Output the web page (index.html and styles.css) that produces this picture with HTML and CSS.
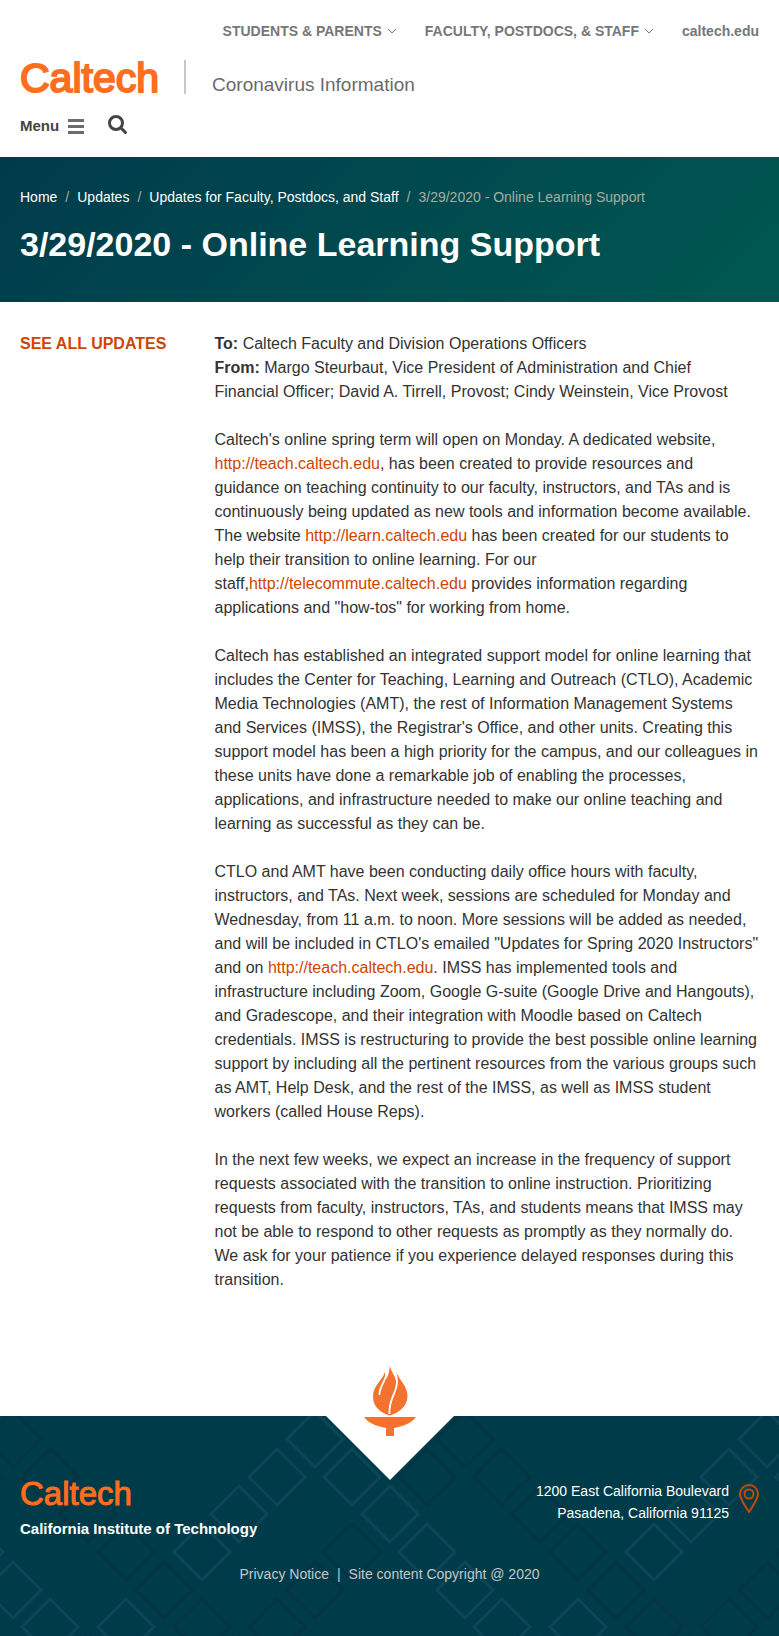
FILE: index.html
```html
<!DOCTYPE html>
<html lang="en">
<head>
<meta charset="utf-8">
<meta name="viewport" content="width=device-width, initial-scale=1">
<title>3/29/2020 - Online Learning Support</title>
<link rel="stylesheet" href="styles.css">
</head>
<body>
<header class="site-header">
  <nav class="audience-nav" aria-label="Audience">
    <button class="audience-item" type="button">STUDENTS &amp; PARENTS
      <svg class="chevron" viewBox="0 0 10 6" aria-hidden="true"><path d="M1 1l4 4 4-4"/></svg></button>
    <button class="audience-item" type="button">FACULTY, POSTDOCS, &amp; STAFF
      <svg class="chevron" viewBox="0 0 10 6" aria-hidden="true"><path d="M1 1l4 4 4-4"/></svg></button>
    <a class="audience-item" href="#">caltech.edu</a>
  </nav>
  <div class="brand">
    <a class="logo" href="#">Caltech</a>
    <a class="site-name" href="#">Coronavirus Information</a>
  </div>
  <div class="tools">
    <button class="menu-button" type="button">Menu
      <svg class="bars" viewBox="0 0 16 15" aria-hidden="true"><path d="M0 0h16v3H0zM0 6h16v3H0zM0 12h16v3H0z"/></svg></button>
    <button class="search-button" type="button" aria-label="Search">
      <svg class="search-icon" viewBox="0 0 19 19" aria-hidden="true"><circle cx="8" cy="8" r="6.5"/><path d="M12.8 12.8l4.7 4.7"/></svg></button>
  </div>
</header>

<section class="hero">
  <nav aria-label="Breadcrumb">
    <ol class="breadcrumb">
      <li><a href="#">Home</a></li>
      <li><a href="#">Updates</a></li>
      <li><a href="#">Updates for Faculty, Postdocs, and Staff</a></li>
      <li>3/29/2020 - Online Learning Support</li>
    </ol>
  </nav>
  <h1 class="page-title">3/29/2020 - Online Learning Support</h1>
</section>

<main class="content">
  <aside class="sidebar"><a class="all-updates" href="#">SEE ALL UPDATES</a></aside>
  <article class="article">
    <p><b>To:</b> Caltech Faculty and Division Operations Officers<br>
    <b>From:</b> Margo Steurbaut, Vice President of Administration and Chief Financial Officer; David A. Tirrell, Provost; Cindy Weinstein, Vice Provost</p>
    <p>Caltech's online spring term will open on Monday. A dedicated website, <a href="#">http://teach.caltech.edu</a>, has been created to provide resources and guidance on teaching continuity to our faculty, instructors, and TAs and is continuously being updated as new tools and information become available. The website <a href="#">http://learn.caltech.edu</a> has been created for our students to help their transition to online learning. For our staff,<a href="#">http://telecommute.caltech.edu</a> provides information regarding applications and "how-tos" for working from home.</p>
    <p>Caltech has established an integrated support model for online learning that includes the Center for Teaching, Learning and Outreach (CTLO), Academic Media Technologies (AMT), the rest of Information Management Systems and Services (IMSS), the Registrar's Office, and other units. Creating this support model has been a high priority for the campus, and our colleagues in these units have done a remarkable job of enabling the processes, applications, and infrastructure needed to make our online teaching and learning as successful as they can be.</p>
    <p>CTLO and AMT have been conducting daily office hours with faculty, instructors, and TAs. Next week, sessions are scheduled for Monday and Wednesday, from 11 a.m. to noon. More sessions will be added as needed, and will be included in CTLO's emailed "Updates for Spring 2020 Instructors" and on <a href="#">http://teach.caltech.edu</a>. IMSS has implemented tools and infrastructure including Zoom, Google G-suite (Google Drive and Hangouts), and Gradescope, and their integration with Moodle based on Caltech credentials. IMSS is restructuring to provide the best possible online learning support by including all the pertinent resources from the various groups such as AMT, Help Desk, and the rest of the IMSS, as well as IMSS student workers (called House Reps).</p>
    <p>In the next few weeks, we expect an increase in the frequency of support requests associated with the transition to online instruction. Prioritizing requests from faculty, instructors, TAs, and students means that IMSS may not be able to respond to other requests as promptly as they normally do. We ask for your patience if you experience delayed responses during this transition.</p>
  </article>
</main>

<footer class="site-footer">
  <svg class="footer-pattern" aria-hidden="true">
    <defs>
      <path id="d" d="M0-28L28 0 0 28-28 0z"/>
      <g id="tile" fill="none" stroke-width="3">
        <g stroke="#0e4556">
          <use href="#d" x="315" y="23"/><use href="#d" x="277" y="61"/><use href="#d" x="352" y="61"/>
          <use href="#d" x="239" y="98"/><use href="#d" x="390" y="98"/><use href="#d" x="202" y="136"/>
          <use href="#d" x="427" y="136"/><use href="#d" x="465" y="174"/><use href="#d" x="502" y="211"/>
          <use href="#d" x="578" y="211"/><use href="#d" x="540" y="249"/>
        </g>
        <g stroke="#053443">
          <use href="#d" x="13" y="23"/><use href="#d" x="50" y="61"/><use href="#d" x="88" y="98"/>
          <use href="#d" x="126" y="136"/><use href="#d" x="164" y="174"/><use href="#d" x="202" y="211"/>
          <use href="#d" x="239" y="249"/><use href="#d" x="277" y="211"/><use href="#d" x="315" y="174"/>
          <use href="#d" x="352" y="136"/><use href="#d" x="427" y="61"/>
        </g>
      </g>
    </defs>
    <use href="#tile" x="-452"/><use href="#tile"/><use href="#tile" x="452"/><use href="#tile" x="904"/><use href="#tile" x="1356"/>
  </svg>
  <svg class="torch" viewBox="0 0 128 116" aria-hidden="true">
    <path fill="#fff" d="M0 52h128L64 116z"/>
    <g fill="#f3722f">
      <path d="M64 2C65 8 69 11 70 17L70.500 8C73 16 81.500 22 81.500 32 81.500 42 73 49 64 51.500 55 49 47 43 47 33 47 21 56 17 59 8L60 15C63 11 63 7 64 2z"/>
      <path d="M38 53h52c-4 6-12 9-22 11v8h-8v-8c-10-2-18-5-22-11z"/>
    </g>
    <path fill="none" stroke="#fff" stroke-width="1.800" d="M61 7C60 18 53 22 53.500 31M69 7C76 26 62 32 63.500 50"/>
  </svg>
  <div class="footer-main">
    <div class="footer-brand">
      <a class="logo footer-logo" href="#">Caltech</a>
      <strong class="institute">California Institute of Technology</strong>
    </div>
    <div class="location">
      <address class="address">1200 East California Boulevard<br>Pasadena, California 91125</address>
      <svg class="pin" viewBox="0 0 20 29" aria-hidden="true"><path d="M10 1C5 1 1 5 1 10c0 5 4 10 9 18 5-8 9-13 9-18 0-5-4-9-9-9z"/><circle cx="10" cy="10" r="4.5"/></svg>
    </div>
  </div>
  <div class="legal"><a href="#">Privacy Notice</a><span>|</span><span>Site content Copyright @ 2020</span></div>
</footer>
</body>
</html>
```
FILE: styles.css
```css
* { box-sizing: border-box; }
body {
  margin: 0;
  background: #fff;
  color: #333;
  font: 16px/24px "Liberation Sans", Arial, sans-serif;
}
a { color: inherit; text-decoration: none; }
button { padding: 0; border: 0; background: none; font: inherit; color: inherit; cursor: pointer; }
svg { display: block; flex: none; }

.site-header { padding: 20px 20px 19px; }
.audience-nav { display: flex; flex-wrap: wrap; justify-content: flex-end; gap: 0 28px; }
.audience-item {
  display: flex;
  align-items: center;
  gap: 5px;
  color: #777;
  font-size: 14px;
  font-weight: bold;
  line-height: 22px;
}
.chevron { width: 10px; height: 6px; fill: none; stroke: #777; stroke-width: 1; }

.brand { display: flex; align-items: stretch; margin-top: 18px; }
.logo {
  color: #ff6e1e;
  font-size: 41px;
  line-height: 36px;
  -webkit-text-stroke: 2px #ff6e1e;
}
.site-name {
  margin: 0 0 2px 25px;
  padding: 12px 0 0 26px;
  border-left: 2px solid #c8c8c8;
  color: #6a6a6a;
  font-size: 19px;
  line-height: 26px;
  height: 34px;
}
.tools { display: flex; align-items: center; gap: 24px; margin-top: 18px; }
.menu-button {
  display: flex;
  align-items: center;
  gap: 9px;
  color: #444;
  font-size: 15px;
  font-weight: bold;
  line-height: 24px;
}
.bars { width: 16px; height: 15px; fill: #6b6b73; }
.search-icon { width: 19px; height: 19px; fill: none; stroke: #444; stroke-width: 3; stroke-linecap: round; }
.search-button { padding-bottom: 4px; }

.hero {
  padding: 30px 20px 36px;
  background: linear-gradient(135deg, #003b4c 0%, #005851 100%);
  color: #fff;
}
.breadcrumb {
  display: flex;
  flex-wrap: wrap;
  margin: 0;
  padding: 0;
  list-style: none;
  font-size: 14px;
  line-height: 20px;
  color: #a9aca2;
}
.breadcrumb a { color: #fff; }
.breadcrumb li + li::before { content: "/"; padding: 0 8px; color: #a9aca2; }
.page-title { margin: 15px 0 0; font-size: 34px; line-height: 44px; }

.content {
  display: grid;
  grid-template-columns: minmax(0, 1fr) minmax(0, 3fr);
  gap: 13px;
  padding: 30px 20px 0;
}
.all-updates { color: #cf4500; font-weight: bold; }
.article p { margin: 0 0 24px; }
.article a { color: #cf4500; }

.site-footer {
  position: relative;
  margin-top: 100px;
  padding: 62px 20px 51px;
  background: #003b4a;
  color: #fff;
}
.footer-pattern { position: absolute; top: 0; left: 0; width: 100%; height: 100%; overflow: hidden; }
.torch { position: absolute; top: -52px; left: calc(50% - 64px); width: 128px; height: 116px; }
.footer-main { position: relative; display: flex; justify-content: space-between; align-items: flex-start; gap: 20px; }
.footer-brand { display: flex; flex-direction: column; }
.footer-logo { font-size: 33px; line-height: 32px; -webkit-text-stroke-width: 1px; }
.institute { margin-top: 8px; font-size: 15px; line-height: 22px; }
.location { display: flex; align-items: flex-start; gap: 10px; padding-top: 2px; }
.address { font-size: 14px; font-style: normal; line-height: 22px; text-align: right; }
.pin { width: 20px; height: 29px; margin-top: 4px; fill: none; stroke: #c04d00; stroke-width: 2; }
.legal {
  position: relative;
  display: flex;
  flex-wrap: wrap;
  justify-content: center;
  gap: 8px;
  margin-top: 23px;
  color: #c3c8ca;
  font-size: 14px;
  line-height: 22px;
}

@media (max-width: 600px) {
  .content { grid-template-columns: minmax(0, 1fr); }
  .footer-main { flex-direction: column; }
}
```
